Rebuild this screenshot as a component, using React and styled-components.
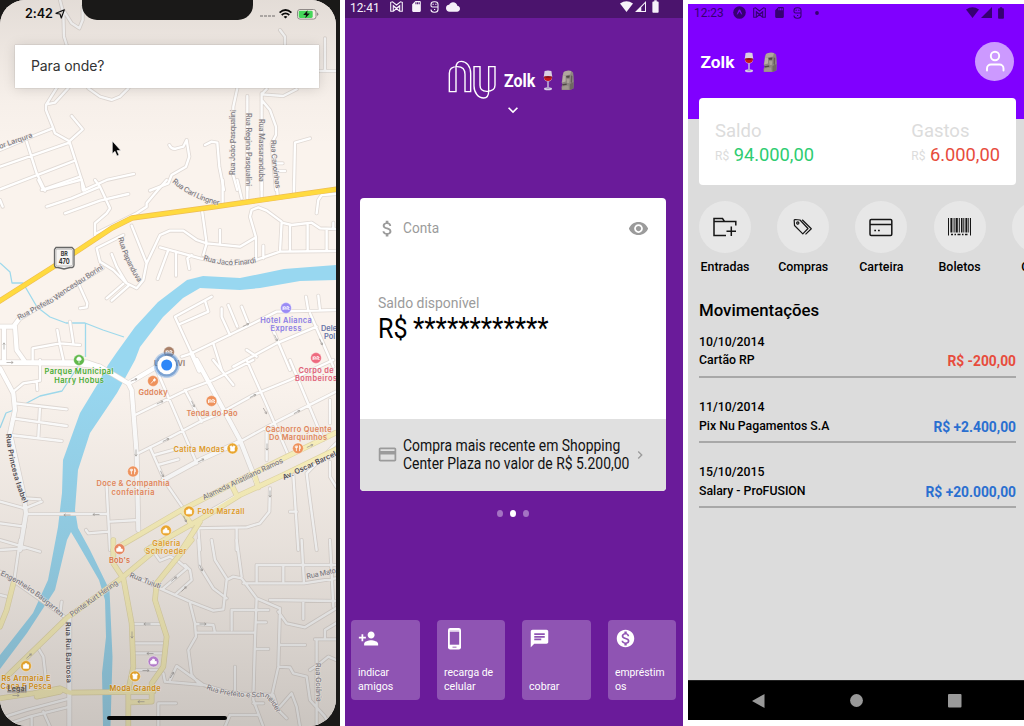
import React from "react";
import styled, { createGlobalStyle } from "styled-components";
import {
  MdAttachMoney,
  MdVisibility,
  MdCreditCard,
  MdPersonAdd,
  MdChat,
  MdMonetizationOn,
  MdKeyboardArrowRight,
  MdKeyboardArrowDown,
  MdCloud,
  MdSdCard,
  MdBatteryFull,
} from "react-icons/md";

const Global = createGlobalStyle`
  * { box-sizing: border-box; }
  body { margin: 0; background: #fff; font-family: Roboto, "Liberation Sans", sans-serif; overflow: hidden; }
  svg { display: block; flex: none; }
`;

const Page = styled.main`
  display: flex;
  gap: 5px;
  width: 1024px;
  height: 726px;
  overflow: hidden;
  background: #fff;
`;

/* Text set in Roboto, narrowed or widened with $sx */
const Text = styled.span`
  display: inline-block;
  white-space: nowrap;
  font-size: ${(p) => p.$size}px;
  line-height: ${(p) => p.$lh || p.$size}px;
  font-weight: ${(p) => p.$weight || 400};
  color: ${(p) => p.$color || "inherit"};
  transform: scaleX(${(p) => p.$sx || 1});
  transform-origin: ${(p) => p.$origin || "left"} center;
`;

/* ---------- Map phone ---------- */

const MapPhone = styled.section`
  width: 340px;
  height: 726px;
  background: #1a1918;
  flex: none;
`;

const MapScreen = styled.div`
  position: relative;
  width: 336px;
  height: 726px;
  border-radius: 25px 25px 27px 27px;
  overflow: hidden;
  background: #faf3ed;
`;

const MapCanvas = styled.svg`
  position: absolute;
  inset: 0;
  font-family: Inter, "Noto Sans", sans-serif;
`;

const MapOverlay = styled.div`
  position: relative;
  display: flex;
  flex-direction: column;
  height: 100%;
`;

const Notch = styled.div`
  position: absolute;
  left: 82px;
  top: 0;
  width: 171px;
  height: 20px;
  background: #1a1918;
  border-radius: 0 0 15px 15px;
`;

const IosStatus = styled.header`
  display: flex;
  align-items: center;
  height: 28px;
  padding-left: 25px;
  padding-right: 17px;
  font: 600 12.6px/28px Inter, sans-serif;
  letter-spacing: -0.1px;
  color: #0c0c0c;
`;

const IosRight = styled.div`
  display: flex;
  align-items: center;
  margin-left: auto;
`;

const SearchField = styled.div`
  margin: 17px 0 0 15px;
  width: 304px;
  height: 43px;
  padding-left: 16px;
  background: #fff;
  box-shadow: 0 0 1px rgba(0, 0, 0, 0.3), 0 1px 12px rgba(0, 0, 0, 0.13);
  font: 400 14px/42px Inter, sans-serif;
  letter-spacing: -0.12px;
  color: #333;
`;

const HomeBar = styled.div`
  width: 120px;
  height: 4px;
  margin: auto 0 6px 107px;
  border-radius: 2px;
  background: #060606;
`;

/* Streets are listed per map tile: each tile is offset vertically and drawn at a third of its units */
const TILES = [
  {
    y: 0,
    minor:
      "M180 0L190 40L192 110L200 135M190 30L215 70L238 85L248 60V20M840 90L855 110V135M975 115V213M960 213H1008M205 264L165 308L140 313M170 264L138 315V330L158 380L165 400L208 424L245 540L248 570M265 265L300 290L335 300L360 290L385 265M215 348L248 388L208 424M158 385L100 408L0 450M0 500L208 428M0 568L222 483M80 425L110 520L135 572M125 570L240 530M250 572L320 540L402 522M508 435Q515 450 530 445L550 440L560 420L568 470L558 500L515 525L505 550L450 572M615 435L635 425L652 428L658 500L672 570M712 265L700 320L698 520L712 570M742 288V570M785 280V570M785 283L800 267M785 283L850 288L890 268M785 300L810 330L828 380V405L815 430L828 570M825 490H848M828 513H855M930 415L885 428L882 570",
  },
  {
    y: 180,
    minor:
      "M115 0L130 30L240 0M0 60L8 80M140 80L215 55L300 20M245 0L255 30M195 100L300 62L385 42M285 0L300 20L330 85L320 100L285 130V165M500 0L465 40L440 70V80L410 100L290 160M668 0V68M712 0L725 55M742 0V55M785 0V50M828 0L833 45M882 0V40M1008 42L965 45L955 60L950 100M395 137L440 250M440 250L480 165L510 152L550 152L590 180L620 190L720 200L768 172L750 110L755 90L775 82L800 92L845 125L840 215M606 90L620 190L610 225M768 172V240L840 215L1008 213M845 128L875 135L935 128L960 145L1008 147M870 140V213M923 133V213M980 150V213M1000 128V147M660 150V190M790 197V235M768 240L690 252L600 235L480 202M440 250L430 300L410 325L380 310L340 270L300 245L290 205L370 165M505 210L473 297M528 215V287M575 225L562 235L568 267M335 222L350 260L380 310M370 312L320 355M385 318L335 362M235 310L262 370L260 382L240 385M308 265L55 420M210 425L220 490M98 545V505L180 490L240 495M172 450L180 495L190 540M635 350L525 410L575 520M615 362L625 395L540 432M545 530L575 520L750 435L830 395L1008 390M665 385V410L690 465M685 375L712 440M725 380L745 430M918 350L925 392M955 347L960 390M815 440L870 570M640 490L665 570M700 560L830 490L950 440M930 400L1000 560M740 510L770 530",
    main: "M0 440H40L55 420M12 440V545M45 440L50 510L75 545M0 547H260L300 560M575 520L598 572",
  },
  {
    y: 360,
    minor:
      "M405 165L560 90L640 60L760 0M415 280L495 240L600 185L660 160L760 105L870 60L1000 0M720 245L830 185L1008 95M470 30L590 310M555 90L605 185M640 0L700 75M450 262L495 365L550 445M475 315L535 298M465 285L520 270M740 0L800 135L865 285M870 0L970 240M800 205V300M990 120V190M1008 250L920 340L930 420L950 570M880 345L895 570M870 455H890M810 385L808 455L780 490L740 502L580 505M595 505L600 570M710 505V570M990 305V350L1008 380M40 95L70 70L120 62V0M45 130L200 148M38 175L200 198M30 225L185 243M120 140L115 232M0 425L75 445L125 425M75 415L120 418M80 462H325M320 380L330 570M258 510L265 520L325 515M330 485L415 480M110 65L112 90M0 490L75 500M0 570L75 565",
    main: "M0 8L230 12L300 20L385 70L395 90M385 70L470 20L500 5M395 90L410 280L415 510M590 0L720 240L775 380M490 360L600 300L720 245M0 25L40 100L45 150L30 220L70 400L78 460L60 570M640 450L710 410",
    yellow:
      "M340 570L545 450L720 360L850 295L1008 218M1008 268L850 345L720 405L640 455L580 490M695 375L712 410M765 350L775 382M545 450L575 495M580 490L440 570M600 485L545 570",
  },
  {
    y: 540,
    minor:
      "M60 0L40 140M0 0L120 35M0 165L20 170M0 95L200 235M185 185L182 210M115 325L130 350L138 420M0 535L80 510L210 475M0 560L90 530L210 500M130 515L150 560M95 530V560M385 100L480 145L570 185L640 212L670 208L680 120L700 110L725 115L770 175L840 205M810 180L1008 183M490 145L560 85L530 60M525 165L575 120L570 90L555 75M450 20L480 62L510 50L530 60M595 0L600 80L640 145L680 175M635 0L645 60L680 115M710 0L725 110M905 0L912 130H730M770 125V75H1008M850 80V125M912 130L1008 115M770 175L765 300L760 480L790 560M840 205L835 380L815 470M835 215L860 250L915 262L1008 205M910 183V237M990 0L1000 200M695 270V210H805M645 278L640 255L590 252M590 278H765M570 190L585 250L588 290L565 330L575 405L600 435M400 252H485M400 310H490M400 340H490M400 390H485M490 400L495 425L610 435L530 378L510 420M610 435L700 460L820 465M705 380V450M770 247H798M765 327H805M840 315H915M835 380L870 382L880 400L920 410L930 480L975 530L990 560M1008 250L975 270V295M945 298H1008M950 300V560M475 490H528M475 490V560M840 500L875 460L890 500L900 560M820 465L835 510L860 535M930 390L960 370L985 350L1008 360M675 560L690 525H740L775 525M760 490H790",
    main: "M208 235V560",
    yellow:
      "M575 0L470 130L465 180L500 290L490 380L455 430V485L390 487M340 0V70L370 115L395 250L400 380L385 450V560M490 10L370 110L200 235L20 410M0 475L100 460L180 445L210 458L460 455M110 470L180 455M40 130L20 210L0 260",
  },
];

const TileLayer = ({ kind, color, width }) => (
  <g fill="none" stroke={color} strokeWidth={width} strokeLinejoin="round" strokeLinecap="round">
    {TILES.map((t) => t[kind] && <path key={t.y} transform={`translate(0 ${t.y}) scale(.3333)`} d={t[kind]} />)}
  </g>
);

const STREETS = [
  ["or Larqura", "M0 149L36 136", 35],
  ["Rua Carl Lingner", "M172 182Q192 200 222 206", 53],
  ["Rua João Pasqualini", "M235.5 175V100", 65],
  ["Rua Regina Pasqualini", "M245.7 113V200", 73],
  ["Rua Massaranduba", "M259.3 119V200", 63],
  ["Rua Canoinhas", "M271 140Q271 160 276 190", 49],
  ["Rua Papanduva", "M118 238Q125 264 140 285", 49],
  ["Rua Prefeito Wenceslau Borini", "M19 320L57 300L66 293L106 267", 99],
  ["Rua Jacó Finardi", "M203 260Q230 269 258 262", 54],
  ["Rua Princesa Isabel", "M6 434Q9 470 24 505", 72, 1],
  ["Alameda Aristiliano Ramos", "M204 500L286 461", 88],
  ["Av. Oscar Barcel", "M284 480L340 454", 58, 1],
  ["Engenheiro Baugarten", "M0 575Q30 588 63 619", 75],
  ["Ponte Kurt Hering", "M72 617L121 582", 57],
  ["Rua Tuiuti", "M129 577L163 590", 33],
  ["Rua Rui Barbosa", "M65.6 622L66.6 690", 61, 1],
  ["Rua Prefeito e Schneider", "M206 689Q230 699 264 697Q271 700 278 716", 80],
  ["Rua Mato", "M307 579L340 572", 30],
  ["Rua Goiânia", "M315.5 663L316.5 710", 39],
];

const ORANGE = "#ee925c";
const GOLD = "#e9a62f";
const PLACES = [
  { x: 286, y: 308, c: "#9a8bf5", t: "#8b7de6", g: "bed", lines: [["Hotel Alianca", 286, 323, 51.5], ["Express", 286, 331.3, 31]] },
  { x: 79, y: 360, c: "#62b94c", t: "#4aad36", g: "tree", lines: [["Parque Municipal", 79, 374.3, 69], ["Harry Hobus", 79, 383, 49.5]] },
  { x: 169, y: 352, c: "#a98068", t: "#937a6c", g: "bed", lines: [["UNIDAVI", 169.5, 366.3, 31]] },
  { x: 153, y: 381, c: ORANGE, t: "#e0855a", g: "key", lines: [["Gddoky", 153, 395.3, 29]] },
  { x: 211.5, y: 401, c: ORANGE, t: "#e0855a", g: "bed", lines: [["Tenda do Pão", 212, 415.8, 51]] },
  { x: 316, y: 358, c: "#ee6a7f", t: "#e06079", g: "bed", lines: [["Corpo de", 316, 372.7, 35], ["Bombeiros", 316, 381, 42]] },
  { x: 232.5, y: 448.5, c: GOLD, t: "#dd9b2c", g: "shirt", lines: [["Catita Modas", 199, 451.5, 51]] },
  { x: 298, y: 448.3, c: ORANGE, t: "#e0855a", g: "fork", lines: [["Cachorro Quente", 298.5, 432, 66], ["Do Marquinhos", 298, 440.3, 58]] },
  { x: 133, y: 471.5, c: ORANGE, t: "#e0855a", g: "fork", lines: [["Doce & Companhia", 133, 486.2, 73], ["confeitaria", 133, 494.5, 43]] },
  { x: 189, y: 511.5, c: GOLD, t: "#dd9b2c", g: "bag", lines: [["Foto Marzall", 221, 514.4, 47]] },
  { x: 166, y: 530.5, c: GOLD, t: "#dd9b2c", g: "shop", lines: [["Galeria", 166.3, 545.7, 28], ["Schroeder", 166, 553.8, 41]] },
  { x: 119.5, y: 549, c: "#e68660", t: "#d9744b", g: "shop", lines: [["Bob's", 119.5, 563, 21]] },
  { x: 135, y: 676.3, c: "#dfa02c", t: "#c98812", g: "shirt", lines: [["Moda Grande", 135, 690.5, 51]] },
  { x: 153.5, y: 661.5, c: "#b27cc8", t: "#b27cc8", g: "shop", lines: [] },
  { x: 26, y: 666, c: "#dfa02c", t: "#c98812", g: "bag", lines: [["Rs Armaria E", 26, 681, 49], ["Caça E Pesca", 26, 689.3, 51]] },
];

const GLYPHS = {
  bed: <path d="M-3 -1.5V2M-3 1H3V2M-3 0H3V-1L1-1.6L0-.6L-1.5-1.5L-3-.6" />,
  tree: <path d="M0 3.3V0M-2 .2A2.2 2.2 0 1 1 2 .2Z" fill="#fff" />,
  key: <path d="M-2 2.5L.4-.2M.2-1L1.8-2.4L2.5-.8L1 .3Z" fill="#fff" />,
  shirt: <path d="M-2.5-2L-1-2.5L0-1.6L1-2.5L2.5-2L1.8-.4V2.5H-1.8V-.4Z" fill="#fff" />,
  fork: <path d="M-1.6-2.8V2.8M-2.7-2.6V-.7H-.6V-2.6M1.6 2.8V-2.8Q2.6-1.5 2.4 .3H1.6" />,
  bag: <path d="M-2.6-1.2H2.6V2.3H-2.6ZM-1-1.2V-2.3H1V-1.2" fill="#fff" />,
  shop: <path d="M-2.8 2.3V-.5L-.8-1.3V-2.5L1-2V0H2.8V2.3Z" fill="#fff" />,
};

/* One-way markers: x, y, rotation */
const ARROWS = [
  [4, 346, -90], [10, 362.5, 0], [160, 402.5, -25], [166, 440, -25], [201, 460.5, -27], [136, 453, 90],
  [162, 474, 65], [253, 396, -27], [297, 412, -28], [265, 411, 60], [193, 404, 65], [310, 446, -25],
  [267, 447, 90], [134, 380, -20], [67, 515, 180], [96, 514.5, 180], [270, 494, 90], [185, 519, 65],
  [147, 624, 180], [150, 653.5, 180], [146, 670.5, 0], [141, 701.7, 180], [132, 635, 90], [203, 624, 0],
  [174, 579, -40], [184, 589, -45], [172, 675, -60], [201, 568, 65], [29, 656, -42], [16, 695.5, 0],
  [246, 325, -25], [276, 338, 65], [321, 342, 65],
];

const StreetMap = () => (
  <MapCanvas width="336" height="726" viewBox="0 0 336 726">
    <defs>
      <linearGradient id="shade" x1="0" y1="0" x2="0" y2="1">
        <stop offset="0" stopColor="#4a4543" stopOpacity=".13" />
        <stop offset=".14" stopColor="#4a4543" stopOpacity=".02" />
        <stop offset=".2" stopColor="#4a4543" stopOpacity="0" />
        <stop offset=".52" stopColor="#3c3a38" stopOpacity="0" />
        <stop offset=".75" stopColor="#3c3a38" stopOpacity=".1" />
        <stop offset="1" stopColor="#3c3a38" stopOpacity=".25" />
      </linearGradient>
      {STREETS.map((s, i) => (
        <path key={i} id={`street${i}`} d={s[1]} />
      ))}
    </defs>
    <rect width="336" height="726" fill="#faf3ed" />
    <g fill="none" stroke="#9ed9ec" strokeWidth="1.3" strokeLinejoin="round">
      <path d="M0 263L10 272L12 283L23 283L37 307L50 317L66 323L85 323L103 330L124 337M85.500 323V357M79 365L62 391L40 396L23 405M0 428L6 413L14 410" />
    </g>
    <path
      fill="#98d7f0"
      d="M336 265L284 269L240 278L203 276L187 280L158 302L135 327L117 352L108 365L97 385L80 413L63 460L62 493L58 527L48 580L33 613L0 655V669L27 633L55 590L67 540L71 532L77 542L99 580L105 600L106 637L102 673L103 726H110.500L112.500 657L109.500 590L90 550L78 528L75 510L78 470L90 433L117 393L135 360L140 347L163 317L183 298L200 288L240 290L260 288L300 281L336 280Z"
    />
    <TileLayer kind="minor" color="#e1dad5" width="12" />
    <TileLayer kind="main" color="#e1dad5" width="17" />
    <TileLayer kind="minor" color="#fff" width="7" />
    <TileLayer kind="yellow" color="#e6dbac" width="17" />
    <TileLayer kind="main" color="#fff" width="12.500" />
    <TileLayer kind="yellow" color="#fdf4bd" width="13" />
    <g fill="none" strokeLinejoin="round">
      <path d="M-2 302L53 267L112 228L132 218L213 207L338 189" stroke="#eebd55" strokeWidth="5.400" />
      <path d="M-2 302L53 267L112 228L132 218L213 207L338 189" stroke="#ffda3f" strokeWidth="4.200" />
    </g>
    <g fill="none" stroke="#a29d9a" strokeWidth=".7">
      {ARROWS.map(([x, y, r], i) => (
        <path key={i} transform={`translate(${x} ${y}) rotate(${r})`} d="M-3.500 0H3M1.300-1.200L3.200 0L1.300 1.200" />
      ))}
    </g>
    <rect width="336" height="726" fill="url(#shade)" />
    <g fontSize="7.300" stroke="#f3ece7" strokeWidth="1.200" strokeOpacity=".5" paintOrder="stroke" strokeLinejoin="round">
      {STREETS.map(([name, , len, strong], i) => (
        <text key={name} fontWeight={strong ? 600 : 500} fill={strong ? "#514f55" : "#7c797f"}>
          <textPath href={`#street${i}`} textLength={len}>
            {name}
          </textPath>
        </text>
      ))}
    </g>
    <g>
      <path d="M56 247.500H72L74 249.500V265Q74 268 70 267.500L64 269L58 267.500Q54.500 268 54.500 265V249.500Z" fill="#f7f5f3" stroke="#666" strokeWidth="1.300" />
      <rect x="56" y="249.200" width="16.500" height="16.800" rx="1.500" fill="none" stroke="#888" strokeWidth=".5" />
      <g fill="#333" fontWeight="700" textAnchor="middle">
        <text x="64.200" y="255.800" fontSize="5.800" textLength="7" lengthAdjust="spacingAndGlyphs">BR</text>
        <text x="64.200" y="263.800" fontSize="7.300" textLength="11" lengthAdjust="spacingAndGlyphs">470</text>
      </g>
    </g>
    <g fontSize="7.400" fontWeight="600" textAnchor="middle">
      {PLACES.map((p) => (
        <g key={`${p.x}-${p.y}`}>
          <circle cx={p.x} cy={p.y} r="5.400" fill={p.c} stroke="#fff" strokeOpacity=".6" strokeWidth=".6" />
          <g transform={`translate(${p.x} ${p.y})`} fill="none" stroke="#fff" strokeWidth=".8">
            {GLYPHS[p.g]}
          </g>
          {p.lines.map(([t, x, y, w]) => (
            <text key={t} x={x} y={y} textLength={w} fill={p.t} stroke="#f4ede6" strokeOpacity=".5" strokeWidth="1" paintOrder="stroke">
              {t}
            </text>
          ))}
        </g>
      ))}
      <g fill="#6675a8" textAnchor="start">
        <text x="321" y="330.800">Dele</text>
        <text x="324" y="339">Pol</text>
      </g>
      <text x="17" y="690.500" fontSize="7" textLength="19" fill="#55514d" stroke="#bbb3aa" strokeWidth=".6" paintOrder="stroke" textDecoration="underline">
        Legal
      </text>
    </g>
    <circle cx="166.700" cy="365" r="13" fill="#4b8fe0" fillOpacity=".35" />
    <circle cx="166.700" cy="365" r="11.500" fill="#4a80c0" fillOpacity=".55" />
    <circle cx="166.700" cy="365" r="9.300" fill="#fff" />
    <circle cx="166.700" cy="365" r="5.500" fill="#2d87f8" />
    <path d="M112.300 141V153.700L115 151.300L117 156L119 155L117 150.600H120.800Z" fill="#050505" stroke="#fff" strokeWidth=".6" />
  </MapCanvas>
);

const MapApp = () => (
  <MapPhone>
    <MapScreen>
      <StreetMap />
      <MapOverlay>
        <IosStatus>
          2:42
          <svg width="13" height="10" viewBox="-2 0 13 10">
            <path d="M9.300.9L1 4.300L5 5L6.300 9Z" fill="none" stroke="#111" strokeWidth="1.200" strokeLinejoin="round" />
          </svg>
          <IosRight>
            <svg width="19" height="6" viewBox="0 0 19 6" fill="#aaa5a2">
              <path d="M0 4h3v2H0zM4 4h3v2H4zM8 4h3v2H8zM12 4h3v2h-3z" />
            </svg>
            <svg width="18" height="10" viewBox="0 0 18 10" fill="none" stroke="#080808" strokeWidth="1.800">
              <path d="M.6 3.700Q6.500-1.700 12.400 3.700M2.700 6Q6.500 2.700 10.300 6" />
              <path d="M4.600 7.700Q6.500 6.300 8.400 7.700L6.500 9.600Z" fill="#080808" stroke="none" />
            </svg>
            <svg width="22" height="11" viewBox="0 0 22 11">
              <rect x=".5" y=".5" width="18.500" height="9.600" rx="2.500" fill="#f4ece7" stroke="#8f8987" />
              <rect x="1.700" y="1.700" width="14" height="7.200" rx="1.400" fill="#46d65a" />
              <path d="M20 3.500V7Q21.300 6.500 21.300 5.200T20 3.500" fill="#8f8987" />
              <path d="M10.600 1.300L6.200 5.900H9L8.300 9.200L12.800 4.600H10Z" fill="#111" />
            </svg>
          </IosRight>
        </IosStatus>
        <SearchField>Para onde?</SearchField>
        <HomeBar />
        <Notch />
      </MapOverlay>
    </MapScreen>
  </MapPhone>
);

/* ---------- Shared drawings ---------- */

const Wine = ({ w = 10 }) => (
  <svg width={w} height="21" viewBox="0 0 10 21" preserveAspectRatio="none">
    <path d="M1.600 1Q5 0 8.400 1L9.200 6.500Q9 11.500 5 11.500T.8 6.500Z" fill="#d9cfe2" />
    <path d="M.9 7Q5 8.400 9.100 7Q8.800 11 5 11T.9 7" fill="#c4161c" />
    <ellipse cx="5" cy="7.100" rx="4" ry="1" fill="#8e1018" />
    <path d="M4.300 11.300H5.700V17.500H4.300Z" fill="#c9c3dc" />
    <ellipse cx="5" cy="18.700" rx="4" ry="1.500" fill="#d5cde4" />
    <ellipse cx="5" cy="18.300" rx="1.800" ry=".8" fill="#a79fc0" />
  </svg>
);

const Moai = ({ w = 14 }) => (
  <svg width={w} height="21" viewBox="0 0 14 21" preserveAspectRatio="none">
    <path d="M3 2Q5 .5 8 .5Q11.500 .5 13 2.500Q13.800 6 13.800 11L13.400 18.500L9.500 20H.8L.5 17L1.800 14.500L.6 12.500L1.500 9L1.800 5Z" fill="#8d8680" />
    <path d="M3 2Q6 .3 11 1L10 4.500L1.900 6Z" fill="#b0a79e" />
    <path d="M2 6L5 5.400L5 11.500L1.200 12.600Z" fill="#b8afa6" />
    <path d="M5.500 6L9.500 5.600L9 7.800L6 7.800ZM1.300 14.200L6 13.600L6.300 14.800L2 15.400Z" fill="#4d4743" />
    <path d="M6 9L9.300 9.300L8.800 13L6.600 13Z" fill="#aaa198" />
    <path d="M1.500 16.500L8 15.500L8.500 19.500H1Z" fill="#a1988f" />
    <path d="M10.800 5L12.200 6.500L11.800 13L10.500 12Z" fill="#645d58" />
    <path d="M9.500 14L13.500 12L13.200 18.500L9.500 20Z" fill="#6f6862" />
  </svg>
);

const GmailMark = () => (
  <svg width="13" height="11" viewBox="0 0 13 11" fill="none" stroke="currentColor" strokeWidth="1.100">
    <path d="M.7 10.200V1.300L2.500.8L6.500 4L10.500.8L12.300 1.300V10.200H9.700V4.600L6.500 7.200L3.300 4.600V10.200ZM3.300 10.200L9.700 5M9.700 10.200L3.300 5" />
  </svg>
);

const UsbMark = () => (
  <svg width="9" height="12" viewBox="0 0 9 12" fill="none" stroke="currentColor" strokeWidth="1.100">
    <path d="M8 6V3.500Q8 .8 5 .8H4Q1 .8 1 3.500V4.500Q1 6 2.500 6H8V8.500Q8 11.200 5 11.200H4Q1 11.200 1 8.500M2.500 3.300H3.800M5.200 3.300H6.500M4 8.500H5.200" />
  </svg>
);

const WifiMark = () => (
  <svg width="13" height="11" viewBox="0 0 13 11" fill="currentColor">
    <path d="M0 2.500Q6.500-2 13 2.500L6.500 11Z" />
  </svg>
);

const SignalMark = ({ partial }) => (
  <svg width="11" height="11" viewBox="0 0 11 11" fill="currentColor">
    {partial ? <path fillRule="evenodd" d="M11 0V11H0ZM10 2.500L6.300 6.200V10H10Z" /> : <path d="M11 0V11H0Z" />}
  </svg>
);

const PhoneMark = () => (
  <svg width="22" height="23" viewBox="0 0 22 23">
    <rect x="4" y="1" width="13" height="21.500" rx="2.200" fill="#fff" />
    <rect x="5.800" y="5" width="9.400" height="12.700" fill="#8f54b3" />
    <path d="M5.800 3.400H15.200V5H5.800Z" fill="#d8c2e5" />
    <path d="M8.500 19.700H12.500V20.600H8.500Z" fill="#8f54b3" />
  </svg>
);

/* ---------- Nu phone ---------- */

const NuPhone = styled.section`
  display: flex;
  flex-direction: column;
  width: 338px;
  height: 726px;
  flex: none;
  background: #6a1b9a;
  color: #fff;
`;

const AndroidStatus = styled.header`
  display: flex;
  align-items: center;
  height: ${(p) => p.$h}px;
  padding: ${(p) => p.$pad};
  background: ${(p) => p.$bg};
  color: ${(p) => p.$color};
`;

const Marks = styled.div`
  display: flex;
  align-items: center;
  gap: ${(p) => p.$gap}px;
  margin-left: ${(p) => p.$left};
`;

const Brand = styled.div`
  display: flex;
  align-items: center;
  height: 44px;
  margin: 40px 0 0 103px;
`;

const BrandName = styled.div`
  display: flex;
  margin-left: 6.5px;
`;

const Toggle = styled.div`
  display: flex;
  justify-content: center;
  height: 17px;
  margin-top: -2px;
  padding-right: 2px;
`;

const AccountCard = styled.article`
  display: flex;
  flex-direction: column;
  flex: none;
  margin: 80.5px 17px 0 15px;
  height: 293px;
  border-radius: 4px;
  overflow: hidden;
  background: #fff;
  color: #9b9b9b;
`;

const AccountHead = styled.div`
  display: flex;
  align-items: center;
  height: 61px;
  padding: 0 17px;
  gap: 5px;

  & > svg:last-child { margin-left: auto; }
`;

const AccountName = styled.div`
  display: flex;
  padding-top: 1px;
`;

const Balance = styled.div`
  display: flex;
  flex-direction: column;
  flex: 1;
  padding: 36px 0 0 17.5px;
`;

const Amount = styled.div`
  display: flex;
  gap: 2px;
`;

const LastPurchase = styled.div`
  display: flex;
  align-items: center;
  height: 72px;
  padding: 0 17px;
  background: #e0e0e0;
`;

const PurchaseCopy = styled.div`
  display: flex;
  flex-direction: column;
  width: 229px;
  margin-left: 5px;
`;

const Dots = styled.div`
  display: flex;
  justify-content: center;
  gap: 7px;
  margin-top: 19px;
  padding-right: 2px;
`;

const Dot = styled.i`
  width: 6px;
  height: 7px;
  border-radius: 50%;
  background: ${(p) => (p.$on ? "#fff" : "#a473c3")};
`;

const Tiles = styled.div`
  display: flex;
  gap: 17px;
  margin: auto 6px 26px;
`;

const Tile = styled.div`
  display: flex;
  flex-direction: column;
  justify-content: space-between;
  width: 68.5px;
  height: 80px;
  padding: 7px 0 7px 7px;
  border-radius: 4px;
  background: #8f54b3;
`;

const TileCaption = styled.div`
  display: flex;
  flex-direction: column;
`;

const TileIcon = styled.div`
  display: flex;
  align-items: center;
  height: 23px;
`;

const NuLogo = () => (
  <svg width="49" height="40" viewBox="317 182 147 120" fill="none" stroke="#fff" strokeWidth="4.200">
    <path d="M341 277H321V222C321 208 330 202 345 202C360 202 368 210 368 225V277H385V222C385 200 372 186 357 186C345 186 341 193 341 205Z" />
    <path d="M395 202H413V258C413 270 420 276 433 276C448 276 458 270 458 258V202H439V275C439 290 435 296 424 296C408 296 395 280 395 260Z" />
  </svg>
);

const ACTIONS = [
  { icon: <MdPersonAdd size={21} />, lines: ["indicar", "amigos"], sx: [0.94, 0.97] },
  { icon: <PhoneMark />, lines: ["recarga de", "celular"], sx: [0.95, 0.97] },
  { icon: <MdChat size={21} />, lines: ["cobrar"], sx: [0.97] },
  { icon: <MdMonetizationOn size={21} />, lines: ["empréstim", "os"], sx: [0.94, 0.97] },
];

const NuApp = () => (
  <NuPhone>
    <AndroidStatus $h={18} $bg="#4b146d" $color="#f6f1f9" $pad="0 20px 5px 5px">
      <Text $size={13.5} $sx={0.88} $lh={14}>12:41</Text>
      <Marks $gap={7} $left="6px">
        <GmailMark />
        <MdSdCard size={13} />
        <UsbMark />
        <MdCloud size={14} />
      </Marks>
      <Marks $gap={2} $left="auto">
        <WifiMark />
        <SignalMark partial />
        <MdBatteryFull size={15} />
      </Marks>
    </AndroidStatus>
    <Brand>
      <NuLogo />
      <BrandName>
        <Text $size={19} $weight={700} $sx={0.84}>Zolk</Text>
      </BrandName>
      <Marks $gap={8} $left="2px">
        <Wine />
        <Moai w={13} />
      </Marks>
    </Brand>
    <Toggle>
      <MdKeyboardArrowDown size={20} />
    </Toggle>
    <AccountCard>
      <AccountHead>
        <MdAttachMoney size={21} />
        <AccountName>
          <Text $size={15.5} $sx={0.88}>Conta</Text>
        </AccountName>
        <MdVisibility size={21} />
      </AccountHead>
      <Balance>
        <Text $size={15.5} $sx={0.9} $lh={17}>Saldo disponível</Text>
        <Amount>
          <Text $size={28.5} $sx={0.88} $lh={34.5} $color="#000">R$</Text>
          <Text $size={29} $sx={0.905} $lh={33} $color="#000">************</Text>
        </Amount>
      </Balance>
      <LastPurchase>
        <MdCreditCard size={21} />
        <PurchaseCopy>
          <Text $size={16} $sx={0.869} $lh={17.5} $color="#111">Compra mais recente em Shopping</Text>
          <Text $size={16} $sx={0.869} $lh={17.5} $color="#111">Center Plaza no valor de R$ 5.200,00</Text>
        </PurchaseCopy>
        <MdKeyboardArrowRight size={16} />
      </LastPurchase>
    </AccountCard>
    <Dots>
      <Dot />
      <Dot $on />
      <Dot />
    </Dots>
    <Tiles>
      {ACTIONS.map((a) => (
        <Tile key={a.lines[0]}>
          <TileIcon>{a.icon}</TileIcon>
          <TileCaption>
            {a.lines.map((l, i) => (
              <Text key={l} $size={11} $lh={13.5} $sx={a.sx[i]}>{l}</Text>
            ))}
          </TileCaption>
        </Tile>
      ))}
    </Tiles>
  </NuPhone>
);

/* ---------- Finance phone ---------- */

const FinPhone = styled.section`
  display: flex;
  flex-direction: column;
  width: 336px;
  height: 716px;
  margin-top: 4px;
  flex: none;
  overflow: hidden;
  background: #dcdcdc;
`;

const FinTop = styled.div`
  height: 115px;
  flex: none;
  background: #8000ff;
`;

const Profile = styled.div`
  display: flex;
  align-items: center;
  height: 39px;
  margin-top: 20px;
  padding: 0 10px 0 12.5px;
`;

const Owner = styled.div`
  display: flex;
  align-items: center;
  padding-top: 2px;
`;

const Avatar = styled.div`
  display: flex;
  align-items: center;
  justify-content: center;
  width: 39px;
  height: 39px;
  margin-left: auto;
  border-radius: 50%;
  background: #cc99ff;
`;

const Totals = styled.div`
  display: flex;
  justify-content: space-between;
  flex: none;
  position: relative;
  width: 317px;
  height: 87px;
  margin: -21px 0 0 11px;
  padding: 21.5px 16px 0;
  border-radius: 4px;
  background: #fff;
`;

const TotalLine = styled.div`
  display: flex;
  align-items: center;
  gap: 4.5px;
  height: 24px;
  margin-top: 2px;
`;

const Shortcuts = styled.nav`
  display: flex;
  gap: 26.2px;
  flex: none;
  margin: 16px 0 0 11px;
`;

const Shortcut = styled.div`
  display: flex;
  flex-direction: column;
  align-items: center;
  flex: none;
  width: 52px;
  gap: 6.5px;
`;

const Round = styled.div`
  display: flex;
  align-items: center;
  justify-content: center;
  width: 52px;
  height: 52px;
  border-radius: 50%;
  background: #e7e7e7;
`;

const Heading = styled.h2`
  margin: 25.5px 0 0 11px;
  font-size: 16.8px;
  line-height: 22px;
  font-weight: 500;
  color: #000;
`;

const Entry = styled.div`
  display: grid;
  grid-template-columns: 1fr auto;
  align-items: end;
  flex: none;
  width: 317px;
  height: 65.3px;
  margin-left: 11px;
  padding-bottom: 6px;
  border-bottom: 2px solid #a8a8a8;
`;

const EntryInfo = styled.div`
  display: flex;
  flex-direction: column;
`;

const EntryAmount = styled.div`
  display: flex;
  margin-bottom: -0.5px;
`;

const Entries = styled.div`
  display: flex;
  flex-direction: column;
  margin-top: -8.5px;
`;

const NavBar = styled.footer`
  display: flex;
  align-items: center;
  justify-content: space-between;
  height: 40px;
  margin-top: auto;
  padding: 0 62px 0 64px;
  border-top: 1px solid #222;
  background: #000;
`;

const FolderIcon = () => (
  <svg width="24" height="20" viewBox="0 0 24 20" fill="none" stroke="#151515" strokeWidth="1.500">
    <path d="M13 18.500H1V1.500H9.500L11.500 4.500H22.800V8.500M1 4.500H11.500M18.300 9.500V19M13.500 14.200H23" />
  </svg>
);

const TagsIcon = () => (
  <svg width="20" height="18" viewBox="0 0 20 18" fill="none" stroke="#151515" strokeWidth="1.200" strokeLinejoin="round">
    <path d="M1.200 2.500Q1.200 1.500 2.200 1.500L7 2L15 10.500L9.800 15.800L1.500 7.500ZM9.200 1.800L18.300 10.800L12.500 16.400" />
    <circle cx="4.800" cy="5" r="1.100" />
  </svg>
);

const CardIcon = () => (
  <svg width="24" height="19" viewBox="0 0 24 19" fill="none" stroke="#151515" strokeWidth="1.500">
    <rect x="1" y="1.500" width="21.800" height="16" rx="1.200" />
    <path d="M1 6.500H23M5.300 12.500H7M9 12.500H10.800" />
  </svg>
);

const BarcodeIcon = () => (
  <svg width="23" height="18" viewBox="0 0 23 18" fill="#151515">
    <path d="M0 0h1v17.500H0zM2.400 0h2v14.500h-2zM5.600 0h1v14.500h-1zM7.600 0h2.200v14.500H7.600zM10.800 0h1v14.500h-1zM13 0h1.500v14.500H13zM15.300 0h1v14.500h-1zM17.400 0h2v14.500h-2zM20.300 0h.8v14.500h-.8zM22 0h1v17.500h-1zM3 15.700h2v1.500H3zM6.500 15.700H8v1.500H6.500zM9.500 15.700h3v1.500h-3zM14 15.700h1.500v1.500H14zM17 15.700h2.500v1.500H17z" />
  </svg>
);

const SHORTCUTS = [
  ["Entradas", <FolderIcon />],
  ["Compras", <TagsIcon />],
  ["Carteira", <CardIcon />],
  ["Boletos", <BarcodeIcon />],
  ["Conta", null],
];

const ENTRIES = [
  ["10/10/2014", "Cartão RP", "R$ -200,00", "#e74c3c"],
  ["11/10/2014", "Pix Nu Pagamentos S.A", "R$ +2.400,00", "#2a6fd0"],
  ["15/10/2015", "Salary - ProFUSION", "R$ +20.000,00", "#2a6fd0"],
];

const Total = ({ name, value, color }) => (
  <div>
    <Text $size={18.5} $lh={22} $color="#dcdcdc">{name}</Text>
    <TotalLine>
      <Text $size={12} $color="#dcdcdc">R$</Text>
      <Text $size={18.3} $color={color}>{value}</Text>
    </TotalLine>
  </div>
);

const FinanceApp = () => (
  <FinPhone>
    <FinTop>
      <AndroidStatus $h={18} $bg="transparent" $color="#360072" $pad="0 16px 1px 6px">
        <Text $size={13} $lh={14} $sx={0.92}>12:23</Text>
        <Marks $gap={7} $left="7px">
          <svg width="13" height="13" viewBox="0 0 13 13">
            <circle cx="6.500" cy="6.500" r="6.300" fill="currentColor" />
            <path d="M3.700 9Q5.500 3 6.500 3.500Q7.500 3 9.300 9Q7.500 7.500 6.500 5.500Q5.500 7.500 3.700 9" fill="#8000ff" />
          </svg>
          <GmailMark />
          <MdSdCard size={13} />
          <UsbMark />
        </Marks>
        <Marks $gap={0} $left="13px">
          <svg width="4" height="4" viewBox="0 0 4 4"><circle cx="2" cy="2" r="1.900" fill="currentColor" /></svg>
        </Marks>
        <Marks $gap={2} $left="auto">
          <WifiMark />
          <SignalMark />
          <MdBatteryFull size={14} />
        </Marks>
      </AndroidStatus>
      <Profile>
        <Owner>
          <Text $size={17.3} $weight={700} $color="#fff">Zolk</Text>
          <Marks $gap={9} $left="10px">
            <Wine />
            <Moai />
          </Marks>
        </Owner>
        <Avatar>
          <svg width="24" height="24" viewBox="0 0 24 24" fill="none" stroke="#fff" strokeWidth="1.900" strokeLinecap="round" strokeLinejoin="round">
            <path d="M20.500 20.500v-2a4 4 0 0 0-4-4H8a4 4 0 0 0-4 4v2" />
            <circle cx="12" cy="6" r="4.200" />
          </svg>
        </Avatar>
      </Profile>
    </FinTop>
    <Totals>
      <Total name="Saldo" value="94.000,00" color="#2ecc71" />
      <Total name="Gastos" value="6.000,00" color="#e74c3c" />
    </Totals>
    <Shortcuts>
      {SHORTCUTS.map(([name, icon]) => (
        <Shortcut key={name}>
          <Round>{icon}</Round>
          <Text $size={12.4} $lh={14} $weight={500} $origin="center" $color="#000">{name}</Text>
        </Shortcut>
      ))}
    </Shortcuts>
    <Heading>Movimentações</Heading>
    <Entries>
      {ENTRIES.map(([date, title, amount, color]) => (
        <Entry key={date}>
          <EntryInfo>
            <Text $size={12.3} $lh={18.5} $weight={500} $color="#000">{date}</Text>
            <Text $size={12.3} $lh={18.5} $weight={500} $color="#000">{title}</Text>
          </EntryInfo>
          <EntryAmount>
            <Text $size={13.8} $lh={17} $weight={700} $origin="right" $color={color}>{amount}</Text>
          </EntryAmount>
        </Entry>
      ))}
    </Entries>
    <NavBar>
      <svg width="13" height="14" viewBox="0 0 13 14" fill="#999"><path d="M12.500 0V14L0 7Z" /></svg>
      <svg width="13" height="13" viewBox="0 0 13 13" fill="#999"><circle cx="6.500" cy="6.500" r="6.400" /></svg>
      <svg width="14" height="14" viewBox="0 0 14 14" fill="#999"><rect width="13.500" height="13.500" rx="1" /></svg>
    </NavBar>
  </FinPhone>
);

export default function App() {
  return (
    <>
      <Global />
      <Page>
        <MapApp />
        <NuApp />
        <FinanceApp />
      </Page>
    </>
  );
}
